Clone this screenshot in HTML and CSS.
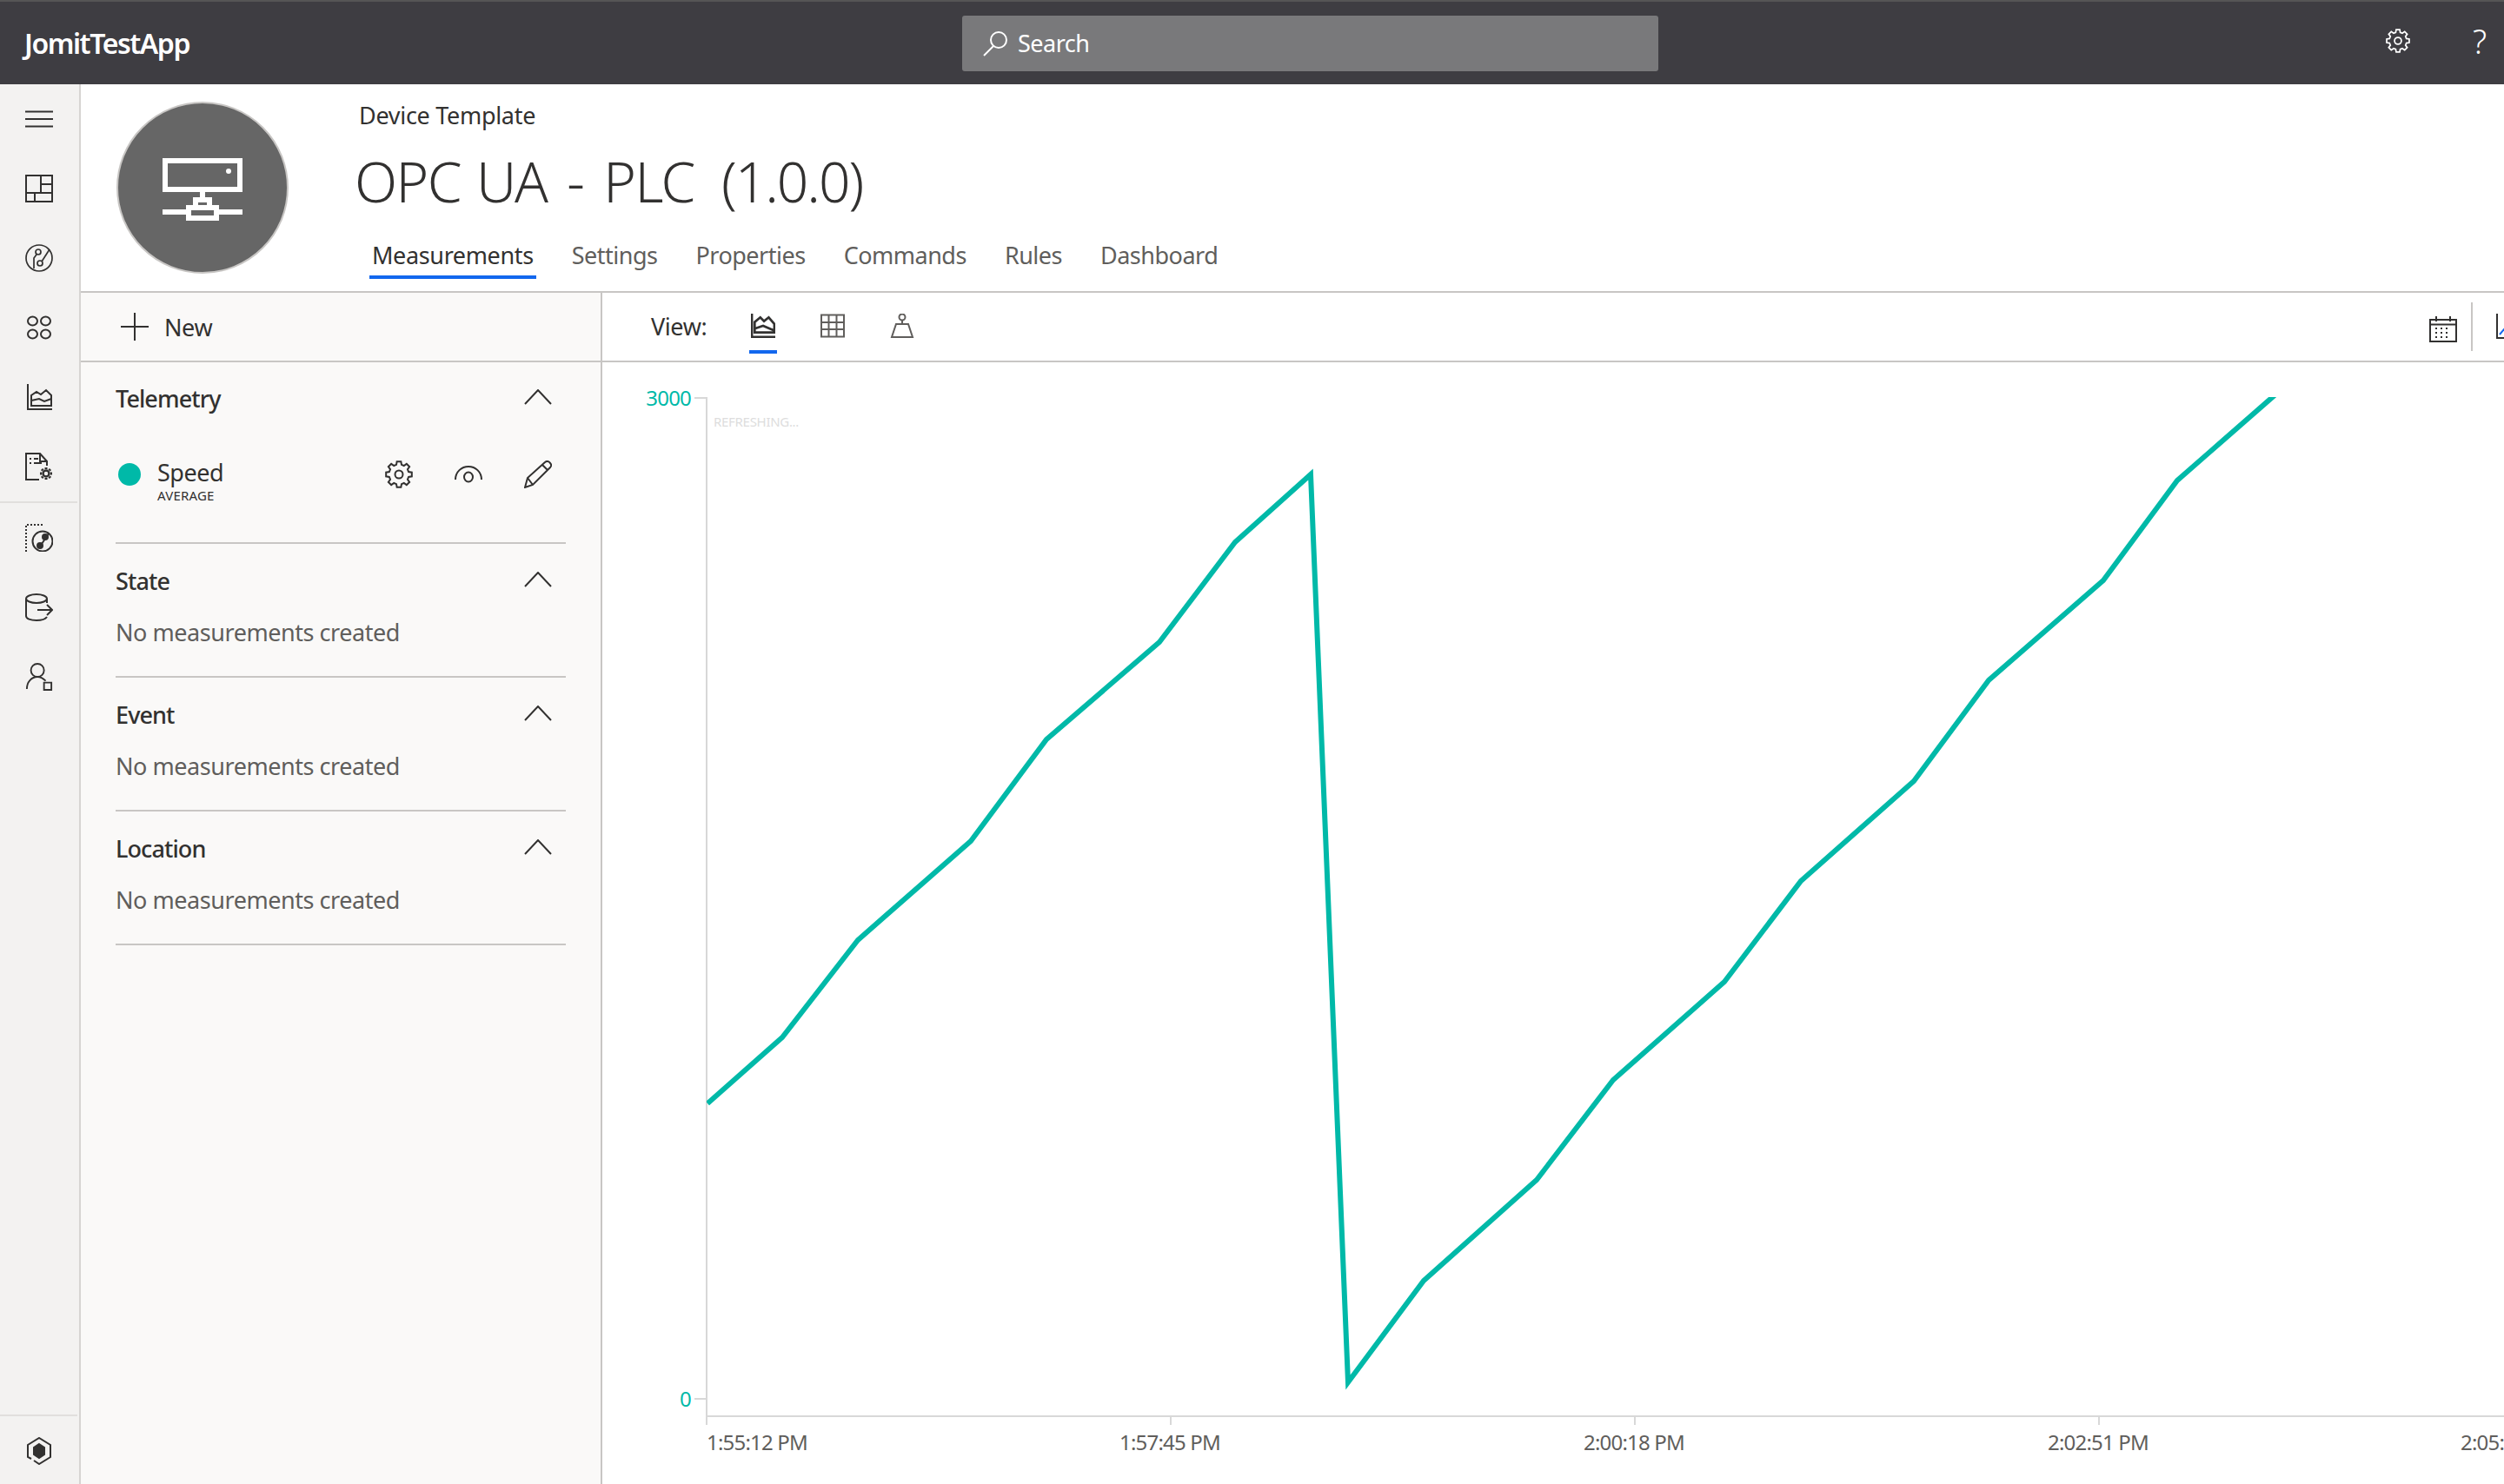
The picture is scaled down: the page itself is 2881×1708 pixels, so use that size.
FILE: index.html
```html
<!DOCTYPE html>
<html lang="en">
<head>
    <meta charset="UTF-8">
    <meta name="viewport" content="width=device-width, initial-scale=1.0">
    <title>OPC UA - PLC</title>
    <link rel="stylesheet" href="styles.css">
</head>
<body>
    <svg class="icon-defs" width="0" height="0">
        <symbol id="gear" viewBox="0 0 32 32">
            <g transform="translate(16 16)">
                <path d="M-2.98 -11.11L-2.35 -14.82L2.35 -14.82L2.98 -11.11L5.75 -9.96L8.82 -12.14L12.14 -8.82L9.96 -5.75L11.11 -2.98L14.82 -2.35L14.82 2.35L11.11 2.98L9.96 5.75L12.14 8.82L8.82 12.14L5.75 9.96L2.98 11.11L2.35 14.82L-2.35 14.82L-2.98 11.11L-5.75 9.96L-8.82 12.14L-12.14 8.82L-9.96 5.75L-11.11 2.98L-14.82 2.35L-14.82 -2.35L-11.11 -2.98L-9.96 -5.75L-12.14 -8.82L-8.82 -12.14L-5.75 -9.96Z"/>
                <circle r="4.5"/>
            </g>
        </symbol>
        <symbol id="chevron" viewBox="0 0 32 18">
            <path d="M1 17L16 1L31 17"/>
        </symbol>
    </svg>

    <header class="topbar">
        <div class="brand">JomitTestApp</div>
        <div class="search">
            <svg class="icon search-icon" viewBox="0 0 30 30"><circle cx="19" cy="11" r="9"/><path d="M13 18L2 29"/></svg>
            <span>Search</span>
        </div>
        <div class="top-actions">
            <svg class="icon top-gear"><use href="#gear"/></svg>
            <span class="help">?</span>
        </div>
    </header>

    <div class="app">
        <nav class="sidebar">
            <div class="nav-top">
                <div class="nav-item">
                    <svg class="icon" viewBox="0 0 32 32"><path d="M0 7.500H32M0 16H32M0 24.500H32"/></svg>
                </div>
                <div class="nav-item">
                    <svg class="icon" viewBox="0 0 32 32"><path d="M1 1H31V31H1ZM18 1V21M18 11H31M1 21H31M11 21V31"/></svg>
                </div>
                <div class="nav-item">
                    <svg class="icon icon-thin" viewBox="0 0 32 32"><circle cx="16" cy="16" r="15"/><path d="M10 28V16L13 12"/><circle cx="15" cy="9" r="3"/><circle cx="17" cy="22" r="3"/><path d="M19 20L28 6"/></svg>
                </div>
                <div class="nav-item">
                    <svg class="icon" viewBox="0 0 32 32"><ellipse cx="8.500" cy="8.500" rx="5.500" ry="5"/><ellipse cx="23.500" cy="8.500" rx="5.500" ry="5"/><ellipse cx="8.500" cy="23.500" rx="5.500" ry="5"/><ellipse cx="23.500" cy="23.500" rx="5.500" ry="5"/></svg>
                </div>
                <div class="nav-item">
                    <svg class="icon" viewBox="0 0 32 32"><path d="M3 1V30H31"/><path d="M7 26V14L13 10L18 13L24 8L30 14V26ZM7 20L16 18L22 21L30 18"/></svg>
                </div>
                <div class="nav-item">
                    <svg class="icon" viewBox="0 0 32 32">
                        <path d="M16 31H1V1H17L25 10V15M17 1V10H25M5 7H7M10 7H15M5 12H7M10 12H19"/>
                        <circle class="solid-ring" cx="24" cy="24" r="3.500"/>
                        <path class="ticks" d="M24 17V19M24 29V31M17 24H19M29 24H31M19 19L20.500 20.500M27.500 27.500L29 29M29 19L27.500 20.500M20.500 27.500L19 29"/>
                    </svg>
                </div>
            </div>
            <div class="nav-middle">
                <div class="nav-item">
                    <svg class="icon" viewBox="0 0 32 32"><path class="dotted" d="M1 32V1H22"/><circle cx="20" cy="20" r="11.5"/><circle class="filled" cx="23" cy="15" r="3"/><circle class="filled" cx="17" cy="25" r="3"/><path d="M19 23L27 11"/></svg>
                </div>
                <div class="nav-item">
                    <svg class="icon" viewBox="0 0 32 32"><ellipse cx="13" cy="6" rx="12" ry="5"/><path d="M1 6V26C1 29 6 31 13 31C18 31 23 30 25 27M25 6V11M14 19H31M25 13L31 19L25 25"/></svg>
                </div>
                <div class="nav-item">
                    <svg class="icon" viewBox="0 0 32 34"><circle cx="14" cy="9" r="8"/><path d="M1 32C1 23 7 17 14 17C18 17 21 19 24 22"/><path d="M22 24H31V33H22Z"/></svg>
                </div>
            </div>
            <div class="nav-bottom">
                <svg class="icon" viewBox="0 0 30 32"><path d="M9 27L15 31L28 23V9L15 1L2 9V23L6 25"/><path class="filled" d="M15 8L21 12V20L15 24L9 20V12Z"/></svg>
            </div>
        </nav>

        <main class="main">
            <section class="page-head">
                <div class="avatar">
                    <svg class="avatar-icon" viewBox="0 0 92 72">
                        <path d="M3 3H89V36H3ZM46 36V48M38 48H54V57H38ZM30 57H62V69H30ZM0 62H30M62 62H92"/>
                        <circle cx="76" cy="15" r="3" class="avatar-dot"/>
                    </svg>
                </div>
                <div class="head-text">
                    <div class="crumb">Device Template</div>
                    <h1 class="title">OPC UA <span class="title-dash">-</span> PLC&nbsp; <span class="title-version">(1.0.0)</span></h1>
                    <div class="tabs">
                        <div class="tab tab-active">Measurements</div>
                        <div class="tab">Settings</div>
                        <div class="tab">Properties</div>
                        <div class="tab">Commands</div>
                        <div class="tab">Rules</div>
                        <div class="tab">Dashboard</div>
                    </div>
                </div>
            </section>

            <div class="workspace">
                <aside class="panel">
                    <div class="panel-bar">
                        <svg class="icon plus" viewBox="0 0 32 32"><path d="M16 0V32M0 16H32"/></svg>
                        <span>New</span>
                    </div>

                    <div class="group group-telemetry">
                        <div class="group-head">
                            <span>Telemetry</span>
                            <svg class="icon chevron"><use href="#chevron"/></svg>
                        </div>
                        <div class="measure">
                            <span class="measure-dot"></span>
                            <div class="measure-name">
                                <div class="measure-label">Speed</div>
                                <div class="measure-sub">AVERAGE</div>
                            </div>
                            <div class="measure-actions">
                                <svg class="icon"><use href="#gear"/></svg>
                                <svg class="icon" viewBox="0 0 32 32"><path d="M1 22C1 13 8 7 16 7C24 7 31 13 31 22"/><ellipse cx="16" cy="19" rx="5" ry="5.5"/></svg>
                                <svg class="icon" viewBox="0 0 32 32"><path d="M1 31L4 20L24 2C26 0 29 1 30 3C32 5 31 7 30 8L10 28ZM4 20L10 28M21 5L27 11"/></svg>
                            </div>
                        </div>
                    </div>

                    <div class="group">
                        <div class="group-head">
                            <span>State</span>
                            <svg class="icon chevron"><use href="#chevron"/></svg>
                        </div>
                        <div class="empty">No measurements created</div>
                    </div>

                    <div class="group">
                        <div class="group-head">
                            <span>Event</span>
                            <svg class="icon chevron"><use href="#chevron"/></svg>
                        </div>
                        <div class="empty">No measurements created</div>
                    </div>

                    <div class="group">
                        <div class="group-head">
                            <span>Location</span>
                            <svg class="icon chevron"><use href="#chevron"/></svg>
                        </div>
                        <div class="empty">No measurements created</div>
                    </div>
                </aside>

                <section class="content">
                    <div class="view-bar">
                        <span class="view-label">View:</span>
                        <div class="view-btn view-btn-active">
                            <svg class="icon" viewBox="0 0 26 26"><path d="M1 0V25H26"/><path d="M4 20V9L10 4L14 8L19 4L25 11V20ZM4 16L13 13L25 18"/></svg>
                        </div>
                        <div class="view-btn view-btn-grid">
                            <svg class="icon" viewBox="0 0 28 27"><path d="M1 1H27V26H1ZM9.5 1V26M18.5 1V26M1 9.500H27M1 17.500H27"/></svg>
                        </div>
                        <div class="view-btn view-btn-pin">
                            <svg class="icon" viewBox="0 0 28 28"><circle cx="14" cy="4" r="3.500"/><path d="M14 8V12M7 12H21L26 27H2Z"/></svg>
                        </div>
                        <div class="view-tools">
                            <svg class="icon calendar" viewBox="0 0 32 30"><path d="M1 4H31V29H1ZM1 9.500H31M8 0V6M24 0V6"/><path class="cal-dots" d="M7 14H25M7 19H25M7 24H25"/></svg>
                            <span class="tool-sep"></span>
                            <svg class="icon line-toggle" viewBox="0 0 30 30"><path d="M1 0V28H30"/><path class="line-blue" d="M4 24L14 12"/></svg>
                        </div>
                    </div>

                    <svg class="chart" viewBox="693 417 2188 1291">
                        <defs>
                            <clipPath id="plot"><rect x="813" y="457" width="2068" height="1173"/></clipPath>
                        </defs>
                        <path class="axis" d="M799 458H813V1640M799 1610H813M813 1630H2881M1347 1630V1640M1881 1630V1640M2415 1630V1640"/>
                        <text class="y-label" x="795" y="467">3000</text>
                        <text class="y-label" x="795" y="1619">0</text>
                        <text class="refresh" x="821" y="491">REFRESHING...</text>
                        <polyline class="series" clip-path="url(#plot)" points="814,1270 900,1194 987,1082 1117,968 1204,851 1334,739 1421,624 1508,546 1551,1591 1638,1474 1768,1358 1856,1243 1984,1130 2072,1014 2202,899 2288,783 2420,668 2505,553 2617,455"/>
                        <text class="x-label" x="813" y="1669">1:55:12 PM</text>
                        <text class="x-label x-mid" x="1346" y="1669">1:57:45 PM</text>
                        <text class="x-label x-mid" x="1880" y="1669">2:00:18 PM</text>
                        <text class="x-label x-mid" x="2414" y="1669">2:02:51 PM</text>
                        <text class="x-label" x="2831" y="1669">2:05:24 PM</text>
                    </svg>
                </section>
            </div>
        </main>
    </div>
</body>
</html>
```

FILE: styles.css
```css
* {
    box-sizing: border-box;
}

body {
    margin: 0;
    width: 2881px;
    height: 1708px;
    overflow: hidden;
    font-family: "Noto Sans", "Open Sans", sans-serif;
    background-color: #fff;
    color: #323130;
}

.icon-defs {
    display: block;
}

.icon {
    display: block;
    width: 32px;
    height: 32px;
    fill: none;
    stroke: currentColor;
    stroke-width: 2;
}

.icon-thin {
    stroke-width: 1.7;
}

/* top bar */
.topbar {
    display: grid;
    grid-template-columns: 1107px 801px 1fr;
    align-items: center;
    height: 97px;
    background-color: #3e3d42;
    border-top: 2px solid #555;
    color: #fff;
}

.brand {
    padding-left: 28px;
    font-size: 32px;
    font-weight: 600;
    letter-spacing: -1.45px;
}

.search {
    display: flex;
    align-items: center;
    height: 64px;
    padding-left: 23px;
    background-color: #79797b;
    border-radius: 3px;
    font-size: 27px;
    letter-spacing: -0.5px;
}

.search-icon {
    width: 30px;
    height: 30px;
    margin-right: 11px;
}

.top-actions {
    display: flex;
    align-items: center;
    justify-content: flex-end;
    margin-top: -6px;
    padding-right: 20px;
}

.top-gear {
    width: 28px;
    height: 28px;
}

.help {
    margin-left: 72px;
    font-size: 38px;
    font-weight: 300;
    line-height: 38px;
}

/* layout */
.app {
    display: flex;
    height: 1611px;
}

.sidebar {
    display: flex;
    flex-direction: column;
    flex: 0 0 93px;
    padding-right: 2px;
    background-color: #f3f2f1;
    border-right: 2px solid #d6d4d2;
}

.nav-item {
    display: flex;
    align-items: center;
    justify-content: center;
    height: 80px;
    color: #323130;
}

.nav-top {
    border-bottom: 2px solid #e1dfdd;
}

.solid-ring {
    stroke-width: 2.5;
}

.ticks {
    stroke-width: 3;
}

.dotted {
    stroke-dasharray: 2 2;
}

.filled {
    fill: currentColor;
}

.nav-middle {
    flex: 1;
}

.nav-bottom {
    display: flex;
    justify-content: center;
    height: 80px;
    padding-top: 24px;
    border-top: 2px solid #e1dfdd;
}

.main {
    display: flex;
    flex-direction: column;
    flex: 1;
    min-width: 0;
}

/* page head */
.page-head {
    display: flex;
    height: 240px;
    padding: 20px 0 0 41px;
    border-bottom: 2px solid #c8c6c4;
}

.avatar {
    display: flex;
    align-items: center;
    justify-content: center;
    width: 198px;
    height: 198px;
    padding-top: 4px;
    background-color: #666;
    border: 2px solid #c8c6c4;
    border-radius: 50%;
}

.avatar-icon {
    width: 92px;
    height: 72px;
    fill: none;
    stroke: #fff;
    stroke-width: 6;
}

.avatar-dot {
    fill: #fff;
    stroke: none;
}

.head-text {
    margin-top: -20px;
    margin-left: 78px;
}

.crumb {
    padding: 18px 0 0 3px;
    font-size: 27px;
    line-height: 36px;
    letter-spacing: -0.3px;
}

.title {
    margin: 14px 0 0 -2px;
    font-size: 64px;
    font-weight: 300;
    line-height: 88px;
    letter-spacing: -1.6px;
    word-spacing: 3px;
}

.title-dash {
    margin: 0 5px;
}

.title-version {
    margin-left: -5px;
    letter-spacing: -2px;
}

.tabs {
    display: flex;
    gap: 38px;
    margin-top: 22px;
    padding-left: 15px;
    font-size: 27px;
    letter-spacing: -0.5px;
    color: #605e5c;
}

.tab {
    padding: 0 3px 4px;
    line-height: 38px;
}

.tab-active {
    color: #323130;
    letter-spacing: -0.37px;
    box-shadow: 0 4px 0 #1267ee;
}

/* left panel */
.workspace {
    display: flex;
    flex: 1;
    min-height: 0;
}

.panel {
    flex: 0 0 600px;
    background-color: #faf9f8;
    border-right: 2px solid #c8c6c4;
}

.panel-bar {
    display: flex;
    align-items: center;
    height: 80px;
    padding-left: 46px;
    border-bottom: 2px solid #c8c6c4;
    font-size: 27px;
    letter-spacing: -0.4px;
}

.plus {
    margin-right: 18px;
}

.group {
    height: 154px;
    margin: 0 40px;
    border-bottom: 2px solid #c8c6c4;
}

.group-telemetry {
    height: 209px;
}

.group-head {
    display: flex;
    align-items: center;
    justify-content: space-between;
    height: 84px;
    padding-right: 16px;
    font-size: 27px;
    font-weight: 500;
    letter-spacing: -0.9px;
}

.group-telemetry .group-head {
    height: 82px;
}

.chevron {
    width: 32px;
    height: 18px;
    margin-bottom: 3px;
}

.empty {
    font-size: 27px;
    line-height: 36px;
    letter-spacing: -0.45px;
    color: #605e5c;
}

.measure {
    display: flex;
    align-items: flex-start;
    padding: 23px 16px 0 3px;
}

.measure-dot {
    width: 26px;
    height: 26px;
    margin: 11px 19px 0 0;
    background-color: #00b9a8;
    border-radius: 50%;
}

.measure-name {
    flex: 1;
}

.measure-label {
    font-size: 27px;
    line-height: 44px;
    letter-spacing: -0.5px;
}

.measure-sub {
    margin-top: -5px;
    font-size: 15px;
    line-height: 18px;
    letter-spacing: 0.2px;
}

.measure-actions {
    display: flex;
    gap: 48px;
    padding-top: 8px;
}

/* chart side */
.content {
    display: flex;
    flex-direction: column;
    flex: 1;
    min-width: 0;
}

.view-bar {
    display: flex;
    align-items: flex-start;
    height: 80px;
    padding-left: 56px;
    border-bottom: 2px solid #c8c6c4;
}

.view-label {
    margin-right: 49px;
    font-size: 27px;
    line-height: 78px;
    letter-spacing: -0.4px;
}

.view-btn {
    width: 32px;
    height: 70px;
    padding-top: 24px;
}

.view-btn .icon {
    width: 28px;
    height: 28px;
    margin-left: 2px;
}

.view-btn-active {
    border-bottom: 4px solid #1267ee;
}

.view-btn-active .icon {
    stroke-width: 2.5;
}

.view-btn-grid {
    margin-left: 48px;
    color: #605e5c;
}

.view-btn-pin {
    margin-left: 48px;
    color: #605e5c;
}

.view-tools {
    display: flex;
    align-items: center;
    margin-left: auto;
    height: 78px;
}

.calendar {
    height: 30px;
    margin: 6px 16px 0 0;
}

.cal-dots {
    stroke-dasharray: 2 4;
}

.tool-sep {
    width: 2px;
    height: 56px;
    margin-right: 27px;
    background-color: #c8c6c4;
}

.line-toggle {
    width: 30px;
    height: 30px;
    margin-right: -21px;
}

.line-blue {
    stroke: #1267ee;
}

.chart {
    display: block;
    flex: 1;
    width: 100%;
    min-height: 0;
}

.axis {
    fill: none;
    stroke: #d8d8d8;
    stroke-width: 2;
}

.series {
    fill: none;
    stroke: #00b9a8;
    stroke-width: 6;
    stroke-linejoin: miter;
}

.y-label {
    font-size: 24px;
    text-anchor: end;
    fill: #00b9a8;
    letter-spacing: -0.8px;
}

.refresh {
    font-size: 15px;
    fill: #ddd;
    letter-spacing: -0.3px;
}

.x-label {
    font-size: 24px;
    fill: #605e5c;
    letter-spacing: -0.8px;
}

.x-mid {
    text-anchor: middle;
}
```
